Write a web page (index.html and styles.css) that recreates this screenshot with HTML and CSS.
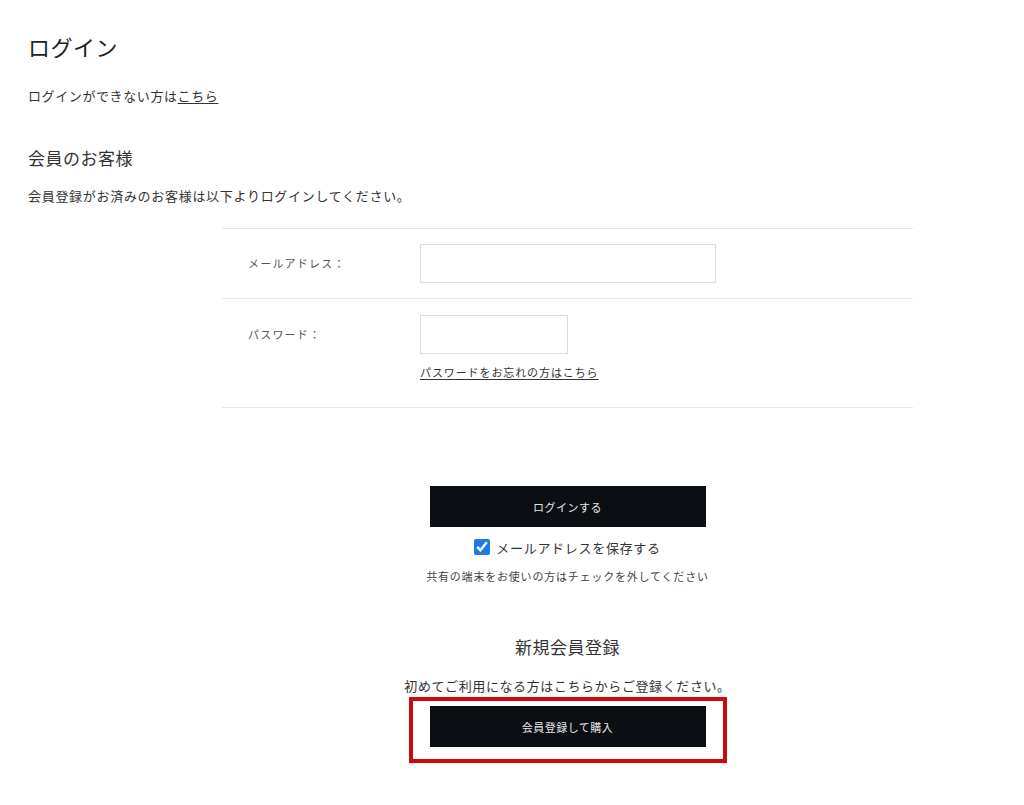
FILE: index.html
```html
<!DOCTYPE html>
<html lang="ja">
<head>
<meta charset="utf-8">
<title>ログイン</title>
<link rel="stylesheet" href="styles.css">
</head>
<body>
<div class="page">
  <h1 class="title">ログイン</h1>
  <p class="lead">ログインができない方は<a href="#" class="link">こちら</a></p>

  <h2 class="section-title">会員のお客様</h2>
  <p class="desc">会員登録がお済みのお客様は以下よりログインしてください。</p>

  <div class="form-area">
    <div class="form-table">
      <div class="form-row">
        <div class="form-label">メールアドレス：</div>
        <div class="form-field">
          <input type="text" class="input input-email">
        </div>
      </div>
      <div class="form-row form-row-pass">
        <div class="form-label">パスワード：</div>
        <div class="form-field">
          <input type="password" class="input input-pass">
          <a href="#" class="forgot">パスワードをお忘れの方はこちら</a>
        </div>
      </div>
    </div>

    <div class="actions">
      <button class="btn btn-login">ログインする</button>
      <label class="save">
        <input type="checkbox" class="save-check" checked>
        <span>メールアドレスを保存する</span>
      </label>
      <p class="note">共有の端末をお使いの方はチェックを外してください</p>

      <h2 class="new-title">新規会員登録</h2>
      <p class="new-desc">初めてご利用になる方はこちらからご登録ください。</p>
      <div class="highlight">
        <button class="btn btn-register">会員登録して購入</button>
      </div>
    </div>
  </div>
</div>
</body>
</html>
```

FILE: styles.css
```css
html, body {
  margin: 0;
  padding: 0;
  background: #ffffff;
}

body {
  font-family: "Noto Sans CJK JP", "Noto Sans", sans-serif;
  color: #333333;
}

.page {
  padding: 30px 28px 40px;
}

.title {
  margin: 0;
  font-size: 22px;
  line-height: 32px;
  font-weight: 400;
  color: #222;
  letter-spacing: 0.5px;
}

.lead {
  margin: 24px 0 0;
  font-size: 13px;
  line-height: 20px;
  letter-spacing: 0.6px;
}

.link {
  color: #333;
  text-decoration: underline;
  text-underline-offset: 2px;
}

.section-title {
  margin: 39px 0 0;
  font-size: 17px;
  line-height: 26px;
  font-weight: 400;
  letter-spacing: 0.5px;
}

.desc {
  margin: 15px 0 0;
  font-size: 13px;
  line-height: 20px;
  letter-spacing: 0.7px;
}

.form-area {
  margin: 22px 0 0 194px;
  width: 691px;
}

.form-table {
  border-top: 1px solid #e6e6e6;
}

.form-row {
  display: flex;
  align-items: flex-start;
  padding: 15px 0 15px 26px;
  border-bottom: 1px solid #e6e6e6;
}

.form-row-pass {
  padding: 16px 0 27px 26px;
}

.form-label {
  width: 172px;
  flex: none;
  font-size: 11px;
  line-height: 39px;
  letter-spacing: 1.2px;
  color: #555;
}

.form-field {
  display: flex;
  flex-direction: column;
  align-items: flex-start;
}

.input {
  box-sizing: border-box;
  height: 39px;
  border: 1px solid #dcdcdc;
  background: #fff;
  margin: 0;
  padding: 0 8px;
}

.input-email {
  width: 296px;
}

.input-pass {
  width: 148px;
}

.forgot {
  margin-top: 10px;
  font-size: 11px;
  line-height: 16px;
  letter-spacing: 0.9px;
  color: #333;
  text-decoration: underline;
  text-underline-offset: 2px;
}

.actions {
  display: flex;
  flex-direction: column;
  align-items: center;
  padding-top: 78px;
}

.btn {
  width: 276px;
  height: 41px;
  border: none;
  background: #0b0e13;
  color: #e8e8e8;
  font-family: "Noto Sans CJK JP", "Noto Sans", sans-serif;
  font-size: 11px;
  letter-spacing: 0.5px;
  cursor: pointer;
  display: block;
  margin: 0;
}

.save {
  display: flex;
  align-items: center;
  gap: 6px;
  margin-top: 10px;
  height: 20px;
  font-size: 13px;
  letter-spacing: 0.7px;
  color: #333;
}

.save-check {
  width: 16px;
  height: 16px;
  margin: 0;
  accent-color: #1e7ae6;
}

.note {
  margin: 11px 0 0;
  font-size: 11px;
  line-height: 16px;
  letter-spacing: 0.8px;
  color: #444;
}

.new-title {
  margin: 50px 0 0;
  font-size: 17px;
  line-height: 26px;
  font-weight: 400;
  letter-spacing: 0.5px;
}

.new-desc {
  margin: 16px 0 0;
  font-size: 13px;
  line-height: 20px;
  letter-spacing: 0.6px;
}

.highlight {
  margin-top: 1px;
  border: 4px solid #cc0a0a;
  padding: 5px 17px 12px;
}
```
